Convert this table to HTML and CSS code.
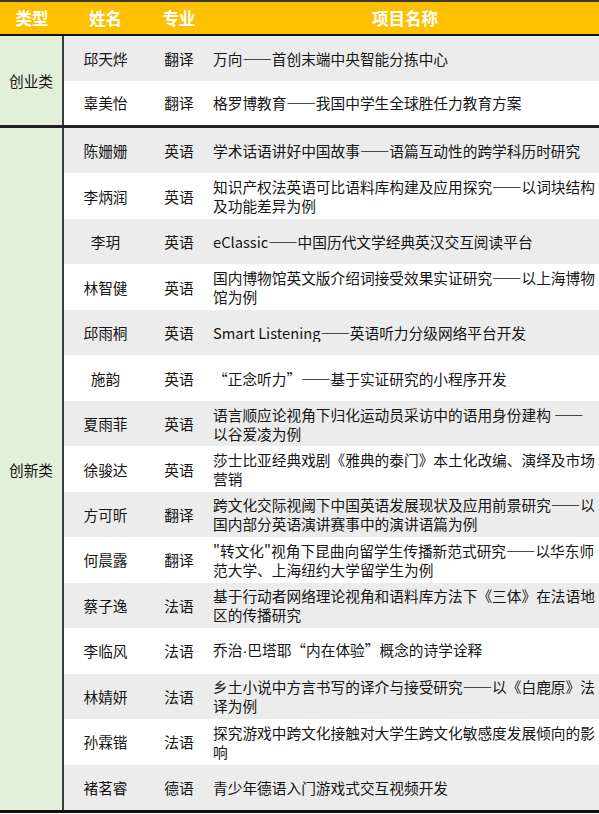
FILE: index.html
```html
<!DOCTYPE html>
<html lang="zh-CN">
<head>
<meta charset="utf-8">
<title>项目名单</title>
<link rel="stylesheet" href="styles.css">
</head>
<body>
<div class="table">
  <div class="head">
    <div class="h">类型</div>
    <div class="h">姓名</div>
    <div class="h">专业</div>
    <div class="h">项目名称</div>
  </div>

  <div class="group g1">
    <div class="cat">创业类</div>
    <div class="rows">
      <div class="row gray"><div class="name">邱天烨</div><div class="major">翻译</div><div class="proj">万向——首创末端中央智能分拣中心</div></div>
      <div class="row"><div class="name">辜美怡</div><div class="major">翻译</div><div class="proj">格罗博教育——我国中学生全球胜任力教育方案</div></div>
    </div>
  </div>

  <div class="group g2">
    <div class="cat">创新类</div>
    <div class="rows">
      <div class="row gray"><div class="name">陈姗姗</div><div class="major">英语</div><div class="proj">学术话语讲好中国故事——语篇互动性的跨学科历时研究</div></div>
      <div class="row"><div class="name">李炳润</div><div class="major">英语</div><div class="proj">知识产权法英语可比语料库构建及应用探究——以词块结构<br>及功能差异为例</div></div>
      <div class="row gray"><div class="name">李玥</div><div class="major">英语</div><div class="proj">eClassic——中国历代文学经典英汉交互阅读平台</div></div>
      <div class="row"><div class="name">林智健</div><div class="major">英语</div><div class="proj">国内博物馆英文版介绍词接受效果实证研究——以上海博物<br>馆为例</div></div>
      <div class="row gray"><div class="name">邱雨桐</div><div class="major">英语</div><div class="proj">Smart Listening——英语听力分级网络平台开发</div></div>
      <div class="row"><div class="name">施韵</div><div class="major">英语</div><div class="proj">“正念听力”——基于实证研究的小程序开发</div></div>
      <div class="row gray"><div class="name">夏雨菲</div><div class="major">英语</div><div class="proj">语言顺应论视角下归化运动员采访中的语用身份建构 ——<br>以谷爱凌为例</div></div>
      <div class="row"><div class="name">徐骏达</div><div class="major">英语</div><div class="proj">莎士比亚经典戏剧《雅典的泰门》本土化改编、演绎及市场<br>营销</div></div>
      <div class="row gray"><div class="name">方可昕</div><div class="major">翻译</div><div class="proj">跨文化交际视阈下中国英语发展现状及应用前景研究——以<br>国内部分英语演讲赛事中的演讲语篇为例</div></div>
      <div class="row"><div class="name">何晨露</div><div class="major">翻译</div><div class="proj">"转文化"视角下昆曲向留学生传播新范式研究——以华东师<br>范大学、上海纽约大学留学生为例</div></div>
      <div class="row gray"><div class="name">蔡子逸</div><div class="major">法语</div><div class="proj">基于行动者网络理论视角和语料库方法下《三体》在法语地<br>区的传播研究</div></div>
      <div class="row"><div class="name">李临风</div><div class="major">法语</div><div class="proj">乔治<span class="dot">·</span>巴塔耶“内在体验”概念的诗学诠释</div></div>
      <div class="row gray"><div class="name">林婧妍</div><div class="major">法语</div><div class="proj">乡土小说中方言书写的译介与接受研究——以《白鹿原》法<br>译为例</div></div>
      <div class="row"><div class="name">孙霖锴</div><div class="major">法语</div><div class="proj">探究游戏中跨文化接触对大学生跨文化敏感度发展倾向的影<br>响</div></div>
      <div class="row gray"><div class="name">褚茗睿</div><div class="major">德语</div><div class="proj">青少年德语入门游戏式交互视频开发</div></div>
    </div>
  </div>
</div>
</body>
</html>
```

FILE: styles.css
```css
html, body {
  margin: 0;
  padding: 0;
  background: #ffffff;
}

body {
  font-family: "Noto Sans CJK SC", "Microsoft YaHei", sans-serif;
  color: #151515;
  width: 599px;
  overflow: hidden;
}

.table {
  width: 599px;
  border-top: 2px solid #3a3a3a;
  border-bottom: 3px solid #111111;
}

.head {
  display: grid;
  grid-template-columns: 64px 83px 64px 1fr;
  height: 32px;
  background: #ffc000;
  border-bottom: 2px solid #111111;
}

.h {
  display: flex;
  align-items: center;
  justify-content: center;
  color: #ffffff;
  font-weight: 700;
  font-size: 16.5px;
  line-height: 1;
}

.group {
  display: flex;
}

.g1 {
  border-bottom: 3px solid #222222;
}

.cat {
  width: 62px;
  flex: none;
  background: #e2efda;
  border-right: 2px solid #3a3a3a;
  display: flex;
  align-items: center;
  justify-content: center;
  font-size: 14.7px;
}

.rows {
  flex: 1;
  display: flex;
  flex-direction: column;
}

.row {
  display: grid;
  grid-template-columns: 83px 64px 1fr;
  align-items: center;
  background: #ffffff;
  font-size: 14.7px;
  line-height: 19px;
}

.g1 .row {
  height: 44.5px;
}

.g2 .row {
  height: 45.47px;
}

.row.gray {
  background: #ececec;
}

.name,
.major {
  text-align: center;
  white-space: nowrap;
}

.proj {
  padding-left: 2px;
  white-space: nowrap;
  overflow: hidden;
}

.dot {
  font-family: "Liberation Sans", sans-serif;
}
```
